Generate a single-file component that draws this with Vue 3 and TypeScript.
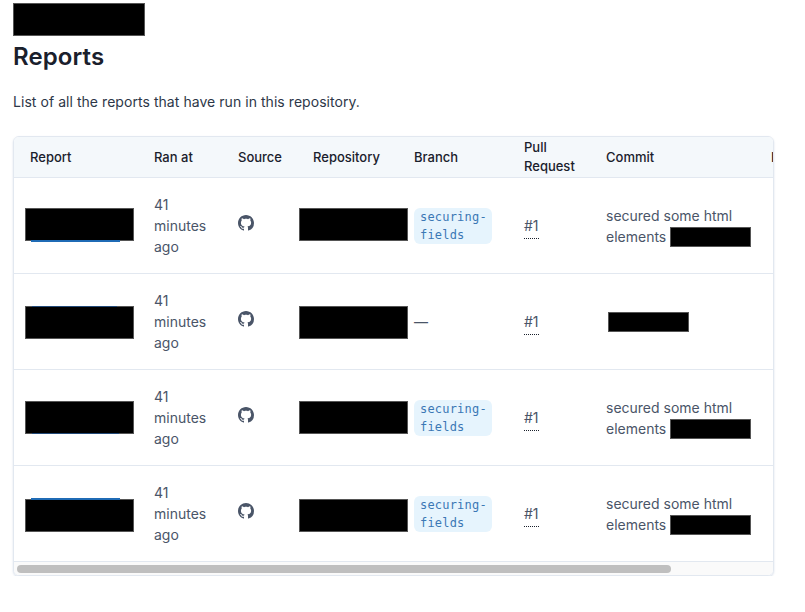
<script setup lang="ts">
interface Row {
  line: 'top' | 'bottom'
  lineWeight: number
  lineLeft: number
  lineWidth: number
  shift: number
  branch: boolean
  commit: boolean
}

const rows: Row[] = [
  { line: 'bottom', lineWeight: 2, lineLeft: 5, lineWidth: 89, shift: -1, branch: true, commit: true },
  { line: 'top', lineWeight: 1, lineLeft: 6, lineWidth: 85, shift: 1, branch: false, commit: false },
  { line: 'bottom', lineWeight: 1, lineLeft: 6, lineWidth: 87, shift: 0, branch: true, commit: true },
  { line: 'top', lineWeight: 2, lineLeft: 5, lineWidth: 89, shift: 2, branch: true, commit: true },
]

function lineStyle(row: Row) {
  return {
    left: row.lineLeft + 'px',
    width: row.lineWidth + 'px',
    height: row.lineWeight + 'px',
    background: row.lineWeight > 1 ? '#1f6bb5' : '#234a78',
    [row.line]: -row.lineWeight + 'px',
  }
}
</script>

<template>
  <main class="page">
    <div class="mask title-mask"></div>
    <h1>Reports</h1>
    <p class="intro">List of all the reports that have run in this repository.</p>
    <div class="card">
      <div class="viewport">
        <table>
          <thead>
            <tr>
              <th class="c1">Report</th>
              <th class="c2">Ran at</th>
              <th class="c3">Source</th>
              <th class="c4">Repository</th>
              <th class="c5">Branch</th>
              <th class="c6">Pull Request</th>
              <th class="c7">Commit</th>
              <th class="c8">Link</th>
            </tr>
          </thead>
          <tbody>
            <tr v-for="(row, i) in rows" :key="i">
              <td>
                <div class="mask name-mask" :style="{ top: row.shift + 'px' }">
                  <i class="link-line" :style="lineStyle(row)"></i>
                </div>
              </td>
              <td>41 minutes ago</td>
              <td>
                <svg class="gh" viewBox="0 0 16 16" width="16" height="16" aria-hidden="true">
                  <path fill="currentColor" d="M8 0C3.58 0 0 3.58 0 8c0 3.54 2.29 6.53 5.47 7.59.4.07.55-.17.55-.38 0-.19-.01-.82-.01-1.49-2.01.37-2.53-.49-2.69-.94-.09-.23-.48-.94-.82-1.13-.28-.15-.68-.52-.01-.53.63-.01 1.08.58 1.23.82.72 1.21 1.87.87 2.33.66.07-.52.28-.87.51-1.07-1.78-.2-3.64-.89-3.64-3.95 0-.87.31-1.59.82-2.15-.08-.2-.36-1.02.08-2.12 0 0 .67-.21 2.2.82.64-.18 1.32-.27 2-.27s1.36.09 2 .27c1.53-1.04 2.2-.82 2.2-.82.44 1.1.16 1.92.08 2.12.51.56.82 1.27.82 2.15 0 3.07-1.87 3.75-3.65 3.95.29.25.54.73.54 1.48 0 1.07-.01 1.93-.01 2.2 0 .21.15.46.55.38A8.01 8.01 0 0 0 16 8c0-4.42-3.58-8-8-8z"/>
                </svg>
              </td>
              <td>
                <div class="mask repo-mask" :style="{ top: row.shift + 'px' }"></div>
              </td>
              <td>
                <code v-if="row.branch" class="branch">securing-fields</code>
                <span v-else>—</span>
              </td>
              <td><span class="pr">#1</span></td>
              <td>
                <template v-if="row.commit">secured some html elements <span class="mask sha-mask"></span></template>
                <span v-else class="mask sha-mask solo"></span>
              </td>
              <td></td>
            </tr>
          </tbody>
        </table>
      </div>
      <div class="track"><div class="thumb"></div></div>
    </div>
  </main>
</template>

<style scoped>
.page {
  padding: 3px 31px 0 13px;
  font-family: Inter, "Liberation Sans", sans-serif;
  color: #4a5568;
}
.mask {
  background: #000;
  border: 1px solid #555;
  box-sizing: border-box;
}
.title-mask {
  width: 132px;
  height: 33px;
}
h1 {
  margin: 3px 0 0;
  font-size: 24px;
  line-height: 36px;
  font-weight: 600;
  color: #1a202c;
  letter-spacing: 0.1px;
}
.intro {
  margin: 16px 0 0;
  font-size: 14px;
  line-height: 21px;
  color: #2d3748;
  letter-spacing: 0.05px;
}
.card {
  margin-top: 24px;
  width: 761px;
  box-sizing: border-box;
  border: 1px solid #e2e8f0;
  border-radius: 6px;
  overflow: hidden;
  box-shadow: 0 1px 2px rgba(45, 85, 140, 0.2);
}
.viewport {
  overflow: hidden;
}
.track {
  height: 13px;
  box-sizing: border-box;
  padding: 3px 3px 2px;
  background: #fafafa;
}
.thumb {
  width: 654px;
  height: 8px;
  border-radius: 4px;
  background: #bfbfbf;
}
table {
  border-collapse: separate;
  border-spacing: 0;
  table-layout: fixed;
  width: 880px;
  font-size: 14px;
  line-height: 21px;
}
th {
  height: 41px;
  padding: 0 16px;
  box-sizing: border-box;
  background: #f4f8fb;
  border-bottom: 1px solid #e2e8f0;
  text-align: left;
  font-size: 13px;
  line-height: 19px;
  font-weight: 500;
  color: #1a202c;
}
.c1 { width: 124px; }
.c2 { width: 84px; }
.c3 { width: 75px; }
.c4 { width: 101px; }
.c5 { width: 110px; }
.c6 { width: 82px; }
.c7 { width: 165px; }
.c8 { width: 139px; }
td {
  height: 96px;
  padding: 0 16px;
  box-sizing: border-box;
  border-bottom: 1px solid #e2e8f0;
  vertical-align: middle;
}
.name-mask,
.repo-mask {
  position: relative;
  width: 109px;
  height: 33px;
  margin-left: -5px;
}
.repo-mask {
  margin-left: -14px;
}
.link-line {
  position: absolute;
  display: block;
}
.gh {
  display: block;
  margin-top: -5px;
  color: #4a5568;
}
.branch {
  display: block;
  width: 78px;
  box-sizing: border-box;
  padding: 0 6px;
  border-radius: 6px;
  background: #e6f4fd;
  color: #3b78b5;
  font-family: "DejaVu Sans Mono", "Liberation Mono", monospace;
  font-size: 12px;
  line-height: 18px;
  letter-spacing: 0.2px;
}
.pr {
  display: inline-block;
  padding: 2px 0;
  line-height: 21px;
  border-bottom: 1px dotted #1a202c;
}
.sha-mask {
  display: inline-block;
  width: 81px;
  height: 20px;
  margin-right: -24px;
  vertical-align: -5px;
}
.sha-mask.solo {
  margin-left: 2px;
}
</style>
